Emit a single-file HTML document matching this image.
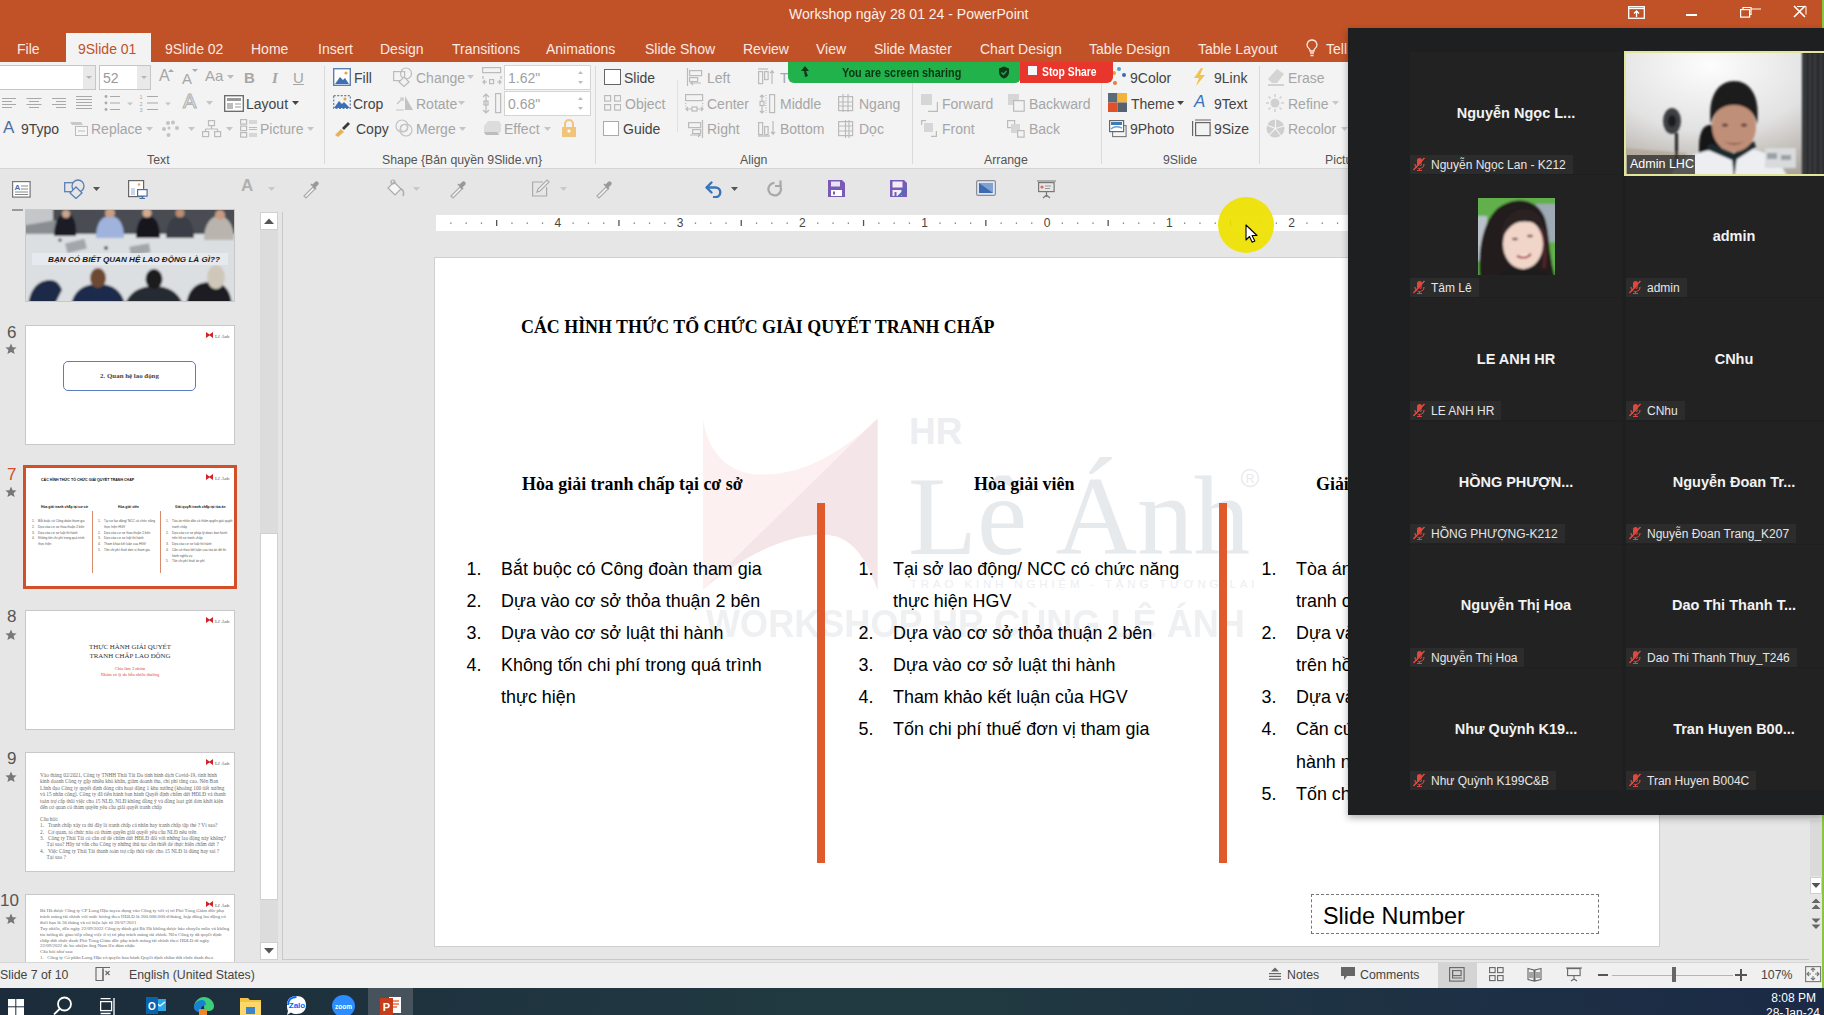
<!DOCTYPE html>
<html><head><meta charset="utf-8">
<style>
*{margin:0;padding:0;box-sizing:border-box}
html,body{width:1824px;height:1015px;overflow:hidden;background:#e6e6e6;font-family:"Liberation Sans",sans-serif}
.a{position:absolute}
.t{position:absolute;white-space:nowrap;line-height:20px}
#titlebar{left:0;top:0;width:1824px;height:62px;background:#c15127}
.tab{position:absolute;top:39px;color:#fbe9e2;font-size:14px;line-height:20px;white-space:nowrap}
#ribbon{left:0;top:62px;width:1824px;height:107px;background:#f3f3f3;border-bottom:1px solid #d4d4d4}
.rb{position:absolute;font-size:14px;line-height:20px;white-space:nowrap;color:#a6a6a6}
.rd{color:#444}
.gl{position:absolute;top:149.5px;font-size:12.3px;line-height:20px;color:#555;white-space:nowrap}
.sep{position:absolute;top:66px;width:1px;height:98px;background:#dadada}
#qat{left:0;top:169px;width:1824px;height:41px;background:#e6e6e6}
#status{left:0;top:962px;width:1824px;height:26px;background:#f0f0f0;border-top:1px solid #d6d6d6}
#taskbar{left:0;top:988px;width:1824px;height:27px;background:linear-gradient(90deg,#1c2c3a 0%,#1f3540 30%,#213a40 50%,#1e3343 70%,#1b2a46 100%)}
#slide{left:434px;top:257px;width:1226px;height:690px;background:#fff;border:1px solid #d0d0d0}
#zoom{left:1348px;top:28px;width:476px;height:787px;background:#1e1f21;box-shadow:0 3px 7px rgba(0,0,0,.30)}
.st{position:absolute;white-space:nowrap;font-size:17.9px;line-height:32.6px;color:#000}
.ss{position:absolute;white-space:nowrap;font-family:"Liberation Serif",serif;font-weight:bold;font-size:17.9px;line-height:22px;color:#000}
.wm{position:absolute;white-space:nowrap}
</style></head><body>

<!-- TITLE BAR -->
<div id="titlebar" class="a">
  <div class="t" style="left:789px;top:4px;font-size:14px;color:#fdf0ea">Workshop ngày 28 01 24 - PowerPoint</div>
  <div class="a" style="left:66px;top:33px;width:85px;height:29px;background:#f3f3f3"></div>
  <div class="tab" style="left:17px">File</div>
  <div class="tab" style="left:78px;color:#c15127">9Slide 01</div>
  <div class="tab" style="left:165px">9Slide 02</div>
  <div class="tab" style="left:251px">Home</div>
  <div class="tab" style="left:318px">Insert</div>
  <div class="tab" style="left:380px">Design</div>
  <div class="tab" style="left:452px">Transitions</div>
  <div class="tab" style="left:546px">Animations</div>
  <div class="tab" style="left:645px">Slide Show</div>
  <div class="tab" style="left:743px">Review</div>
  <div class="tab" style="left:816px">View</div>
  <div class="tab" style="left:874px">Slide Master</div>
  <div class="tab" style="left:980px">Chart Design</div>
  <div class="tab" style="left:1089px">Table Design</div>
  <div class="tab" style="left:1198px">Table Layout</div>
  <svg class="a" style="left:1306px;top:39px" width="12" height="18" fill="none" stroke="#fbe9e2" stroke-width="1.3"><path d="M6 1a4.8 4.8 0 0 0-3 8.6c.8.7 1 1.6 1 2.4h4c0-.8.2-1.7 1-2.4A4.8 4.8 0 0 0 6 1z"/><path d="M4 14h4M4.5 16.5h3"/></svg>
  <div class="tab" style="left:1326px">Tell</div>
</div>

<!-- RIBBON -->
<div id="ribbon" class="a"></div>
<!-- Text group -->
<div class="a" style="left:0;top:65px;width:96px;height:25px;background:#fff;border:1px solid #c6c6c6;border-left:none"></div>
<div class="a" style="left:83px;top:66px;width:12px;height:23px;background:#e9e9e9"></div>
<svg class="a" style="left:85px;top:75px" width="8" height="5"><path d="M1 1h6L4 4z" fill="#b5b5b5"/></svg>
<div class="a" style="left:99px;top:65px;width:52px;height:25px;background:#fff;border:1px solid #c6c6c6"></div>
<div class="a" style="left:137px;top:66px;width:13px;height:23px;background:#e9e9e9"></div>
<svg class="a" style="left:140px;top:75px" width="8" height="5"><path d="M1 1h6L4 4z" fill="#b5b5b5"/></svg>
<div class="rb" style="left:103px;top:68px;font-size:14px;color:#9a9a9a">52</div>
<div class="rb" style="left:159px;top:66px;font-size:16px">A</div>
<svg class="a" style="left:167px;top:68px" width="8" height="5"><path d="M1 4L4 1L7 4z" fill="#aaa"/></svg>
<div class="rb" style="left:182px;top:69px;font-size:15px">A</div>
<svg class="a" style="left:191px;top:68px" width="8" height="5"><path d="M1 1h6L4 4z" fill="#aaa"/></svg>
<div class="rb" style="left:205px;top:66px;font-size:15px">Aa</div>
<svg class="a" style="left:227px;top:75px" width="7" height="4"><path d="M0 0h7L3.5 4z" fill="#bbb"/></svg>
<div class="rb" style="left:244px;top:68px;font-size:15px;font-weight:bold">B</div>
<div class="rb" style="left:272px;top:68px;font-size:15px;font-style:italic;font-family:'Liberation Serif',serif;font-weight:bold">I</div>
<div class="rb" style="left:293px;top:68px;font-size:15px;text-decoration:underline">U</div>
<svg class="a" style="left:0;top:94px" width="100" height="20" stroke="#a9a9a9" stroke-width="1">
 <path d="M2 4.5h14M2 7.5h10M2 10.5h14M2 13.5h10"/>
 <path d="M26.5 4.5h15M29 7.5h10M26.5 10.5h15M29 13.5h10"/>
 <path d="M52 4.5h14M56 7.5h10M52 10.5h14M56 13.5h10"/>
 <path d="M76 2.5h16M76 5.5h16M76 8.5h16M76 11.5h16M76 14.5h16"/>
</svg>
<svg class="a" style="left:103px;top:94px" width="100" height="20">
 <g fill="#a9a9a9"><circle cx="3" cy="2.5" r="1.4"/><circle cx="3" cy="9" r="1.4"/><circle cx="3" cy="15.5" r="1.4"/></g>
 <g stroke="#a9a9a9" stroke-width="1"><path d="M7 2.5h10M7 9h10M7 15.5h10"/><path d="M44 2.5h11M44 9h11M44 15.5h11"/></g>
 <path d="M24 8.5h6l-3 3z" fill="#c5c5c5"/><path d="M62 8.5h6l-3 3z" fill="#c5c5c5"/>
 <g fill="#a9a9a9" font-size="5.5" font-family="Liberation Sans"><text x="36.5" y="5">1</text><text x="36.5" y="11.5">2</text><text x="36.5" y="18">3</text></g>
</svg>
<div class="rb" style="left:183px;top:91px;font-size:20px;color:#fff;-webkit-text-stroke:1.2px #b5b5b5">A</div>
<svg class="a" style="left:206px;top:101px" width="7" height="4"><path d="M0 0h7L3.5 4z" fill="#c5c5c5"/></svg>
<svg class="a" style="left:224px;top:95px" width="20" height="17"><rect x="0.7" y="0.7" width="18.6" height="15.6" fill="#fff" stroke="#666" stroke-width="1.3"/><rect x="3" y="3" width="14" height="3" fill="#999"/><rect x="3" y="8" width="6" height="6" fill="#bbb"/><path d="M11 9h6M11 12h6" stroke="#999"/></svg>
<div class="rb rd" style="left:246px;top:93.5px">Layout</div>
<svg class="a" style="left:292px;top:101px" width="7" height="4"><path d="M0 0h7L3.5 4z" fill="#444"/></svg>
<div class="rb" style="left:3px;top:118px;font-size:17px;color:#4a6fa5">A</div>
<div class="rb rd" style="left:21px;top:119px">9Typo</div>
<svg class="a" style="left:69px;top:121px" width="20" height="16"><path d="M1 1h11l2 3H3z" fill="#c8c8c8"/><rect x="6.5" y="5.5" width="12" height="9" fill="#f6f6f6" stroke="#bbb"/><path d="M9 10h7" stroke="#bbb"/></svg>
<div class="rb" style="left:91px;top:119px">Replace</div>
<svg class="a" style="left:146px;top:127px" width="7" height="4"><path d="M0 0h7L3.5 4z" fill="#c5c5c5"/></svg>
<svg class="a" style="left:161px;top:120px" width="20" height="18" fill="#c3c3c3"><circle cx="7" cy="3" r="2"/><circle cx="12" cy="2.5" r="2"/><circle cx="3" cy="9" r="2"/><circle cx="16" cy="8" r="2"/><circle cx="7.5" cy="15" r="2"/><circle cx="8" cy="8" r="1.5"/></svg>
<svg class="a" style="left:188px;top:127px" width="7" height="4"><path d="M0 0h7L3.5 4z" fill="#c5c5c5"/></svg>
<svg class="a" style="left:202px;top:120px" width="20" height="18" fill="none" stroke="#bbb" stroke-width="1.2"><rect x="6.5" y="0.6" width="6" height="5"/><rect x="0.6" y="11.6" width="6" height="5"/><rect x="12.6" y="11.6" width="6" height="5"/><path d="M9.5 6v3M3.5 9h12M3.5 9v2.5M15.5 9v2.5"/></svg>
<svg class="a" style="left:226px;top:127px" width="7" height="4"><path d="M0 0h7L3.5 4z" fill="#c5c5c5"/></svg>
<svg class="a" style="left:240px;top:119px" width="18" height="19" fill="none" stroke="#bbb" stroke-width="1.2"><rect x="0.6" y="0.6" width="6" height="4.5"/><rect x="0.6" y="7.1" width="6" height="4.5"/><rect x="0.6" y="13.6" width="6" height="4.5"/><path d="M9 2h8M9 4h8M9 8.5h8M9 10.5h8M9 15h8M9 17h8"/></svg>
<div class="rb" style="left:260px;top:119px">Picture</div>
<svg class="a" style="left:307px;top:127px" width="7" height="4"><path d="M0 0h7L3.5 4z" fill="#c5c5c5"/></svg>
<div class="gl" style="left:147px">Text</div>
<div class="sep" style="left:324px"></div>
<!-- Shape group -->
<svg class="a" style="left:333px;top:68px" width="18" height="18"><rect x="0.7" y="0.7" width="16.6" height="16.6" fill="#fff" stroke="#5d7fb0" stroke-width="1.4"/><path d="M2 16L7 9l3 3 2-2 4 6z" fill="#3d6fb6"/><circle cx="13" cy="5" r="1.6" fill="#e8a33c"/></svg>
<div class="rb rd" style="left:354px;top:68px">Fill</div>
<svg class="a" style="left:333px;top:95px" width="18" height="14"><rect x="0.7" y="0.7" width="16.6" height="12.6" fill="none" stroke="#5d7fb0" stroke-width="1.2" stroke-dasharray="2 1.5"/><path d="M1 13L6 6l3 3 2-2 6 6z" fill="#3d6fb6"/><circle cx="12" cy="4" r="1.5" fill="#e8a33c"/></svg>
<div class="rb rd" style="left:353px;top:93.5px">Crop</div>
<svg class="a" style="left:333px;top:121px" width="18" height="16"><path d="M2 14l6-6 3 3-6 5z" fill="#e6b35c"/><path d="M9 7l6-6 2 2-6 6z" fill="#3a3a3a"/></svg>
<div class="rb rd" style="left:356px;top:119px">Copy</div>
<svg class="a" style="left:393px;top:67px" width="20" height="20" fill="none" stroke="#bbb" stroke-width="1.2"><rect x="0.6" y="4.6" width="11" height="9"/><circle cx="13" cy="6.5" r="5.5"/><path d="M11 10l5 5-5 4.5-5-4.5z" fill="#f3f3f3"/></svg>
<div class="rb" style="left:416px;top:68px">Change</div>
<svg class="a" style="left:467px;top:75px" width="7" height="4"><path d="M0 0h7L3.5 4z" fill="#c5c5c5"/></svg>
<svg class="a" style="left:395px;top:94px" width="19" height="17"><path d="M10 16V2l8 14z" fill="#c3c3c3"/><path d="M1 16h8M2 10l5-5M5 4h3v3" stroke="#c3c3c3" stroke-width="1.2" fill="none"/></svg>
<div class="rb" style="left:416px;top:93.5px">Rotate</div>
<svg class="a" style="left:458px;top:101px" width="7" height="4"><path d="M0 0h7L3.5 4z" fill="#c5c5c5"/></svg>
<svg class="a" style="left:395px;top:119px" width="19" height="19" fill="none" stroke="#c3c3c3" stroke-width="1.2"><circle cx="7" cy="7" r="6"/><circle cx="11" cy="11" r="6"/><circle cx="9" cy="9" r="3.5"/></svg>
<div class="rb" style="left:416px;top:119px">Merge</div>
<svg class="a" style="left:459px;top:127px" width="7" height="4"><path d="M0 0h7L3.5 4z" fill="#c5c5c5"/></svg>
<svg class="a" style="left:482px;top:67px" width="20" height="19" fill="none" stroke="#bbb" stroke-width="1.2"><rect x="0.6" y="0.6" width="18" height="5"/><path d="M1 9v3M19 9v3M1 15h4M15 15h4M3 13l-2 2 2 2M17 13l2 2-2 2"/><rect x="7.6" y="12.6" width="4" height="4"/></svg>
<div class="a" style="left:504px;top:65px;width:87px;height:25px;background:#fff;border:1px solid #d4d4d4"></div>
<div class="rb" style="left:508px;top:68px;color:#9f9f9f">1.62"</div>
<svg class="a" style="left:577px;top:70px" width="7" height="15"><path d="M1 4L3.5 1L6 4zM1 11h5L3.5 14z" fill="#bdbdbd"/></svg>
<svg class="a" style="left:482px;top:93px" width="20" height="21" fill="none" stroke="#bbb" stroke-width="1.2"><rect x="13.6" y="0.6" width="5" height="19"/><path d="M4 1v19M1 4l3-3 3 3M1 17l3 3 3-3"/><rect x="2" y="8" width="4" height="4"/></svg>
<div class="a" style="left:504px;top:91px;width:87px;height:25px;background:#fff;border:1px solid #d4d4d4"></div>
<div class="rb" style="left:508px;top:93.5px;color:#9f9f9f">0.68"</div>
<svg class="a" style="left:577px;top:96px" width="7" height="15"><path d="M1 4L3.5 1L6 4zM1 11h5L3.5 14z" fill="#bdbdbd"/></svg>
<svg class="a" style="left:483px;top:120px" width="19" height="16"><path d="M5 1h11l2 3v7l-3 4H3l-2-3V6z" fill="#dcdcdc"/><path d="M3 15l-2-3h13l2 3z" fill="#bcbcbc"/></svg>
<div class="rb" style="left:504px;top:119px">Effect</div>
<svg class="a" style="left:544px;top:127px" width="7" height="4"><path d="M0 0h7L3.5 4z" fill="#c5c5c5"/></svg>
<svg class="a" style="left:561px;top:119px" width="16" height="19"><path d="M4 8V5a4 4 0 0 1 8 0v3" fill="none" stroke="#f0c47a" stroke-width="2"/><rect x="1" y="8" width="14" height="10" fill="#f0c47a"/><circle cx="8" cy="12" r="1.6" fill="#fff"/></svg>
<div class="gl" style="left:382px">Shape {Bản quyền 9Slide.vn}</div>
<div class="sep" style="left:595px"></div>
<!-- Align group -->
<div class="a" style="left:604px;top:69px;width:17px;height:16px;background:#fff;border:1.3px solid #666"></div>
<div class="rb rd" style="left:624px;top:68px">Slide</div>
<svg class="a" style="left:604px;top:95px" width="17" height="16" fill="none" stroke="#bbb" stroke-width="1.2"><rect x="0.6" y="0.6" width="6" height="5.5"/><rect x="10.6" y="0.6" width="6" height="5.5"/><rect x="0.6" y="9.6" width="6" height="5.5"/><rect x="10.6" y="9.6" width="6" height="5.5"/></svg>
<div class="rb" style="left:625px;top:93.5px">Object</div>
<div class="a" style="left:603px;top:121px;width:16px;height:15px;background:#fff;border:1px solid #aaa"></div>
<div class="rb rd" style="left:623px;top:119px">Guide</div>
<div class="a" style="left:677px;top:80px;width:1px;height:52px;background:#e0e0e0"></div>
<svg class="a" style="left:686px;top:68px" width="18" height="18" fill="none" stroke="#bbb" stroke-width="1.2"><path d="M1.5 0v18"/><rect x="3.6" y="2.6" width="12" height="5"/><rect x="3.6" y="9.6" width="8" height="4"/><path d="M15 15H5l2-2M5 15l2 2"/></svg>
<div class="rb" style="left:707px;top:68px">Left</div>
<svg class="a" style="left:685px;top:94px" width="19" height="19" fill="none" stroke="#bbb" stroke-width="1.2"><rect x="0.6" y="0.6" width="17" height="6"/><path d="M0.6 9v4M17.6 9v4" stroke-dasharray="1 1.5"/><path d="M1 15h17M3 13l-2 2 2 2M16 13l2 2-2 2"/><rect x="7" y="13" width="5" height="4" fill="#f3f3f3"/></svg>
<div class="rb" style="left:707px;top:93.5px">Center</div>
<svg class="a" style="left:687px;top:120px" width="17" height="18" fill="none" stroke="#bbb" stroke-width="1.2"><path d="M15.5 0v18"/><rect x="1.6" y="2.6" width="12" height="5"/><rect x="5.6" y="9.6" width="8" height="4"/><path d="M3 15h10l-2-2M13 15l-2 2"/></svg>
<div class="rb" style="left:707px;top:119px">Right</div>
<svg class="a" style="left:758px;top:68px" width="17" height="18" fill="none" stroke="#bbb" stroke-width="1.2"><path d="M0 1h10"/><rect x="0.6" y="3.6" width="4" height="12"/><rect x="6.6" y="3.6" width="3.5" height="8"/><path d="M14 16V3l-2 2M14 3l2 2"/></svg>
<div class="rb" style="left:780px;top:68px">T</div>
<svg class="a" style="left:758px;top:94px" width="18" height="20" fill="none" stroke="#bbb" stroke-width="1.2"><rect x="11.6" y="0.6" width="5" height="18"/><path d="M4 1v18M2 3l2-2 2 2M2 17l2 2 2-2"/><rect x="2" y="7.5" width="4" height="4" fill="#f3f3f3"/><path d="M8 1v18" stroke-dasharray="1 1.5"/></svg>
<div class="rb" style="left:780px;top:93.5px">Middle</div>
<svg class="a" style="left:758px;top:120px" width="18" height="17" fill="none" stroke="#bbb" stroke-width="1.2"><path d="M0 16h12"/><rect x="0.6" y="2.6" width="4" height="12"/><rect x="6.6" y="6.6" width="3.5" height="8"/><path d="M15 1v13l-2-2M15 14l2-2"/></svg>
<div class="rb" style="left:780px;top:119px">Bottom</div>
<svg class="a" style="left:838px;top:94px" width="16" height="18" fill="none" stroke="#bbb" stroke-width="1.2"><rect x="0.6" y="2.6" width="14" height="14"/><path d="M0 8h15M0 12h15M5 0v18M10 0v18"/></svg>
<div class="rb" style="left:859px;top:93.5px">Ngang</div>
<svg class="a" style="left:838px;top:120px" width="16" height="18" fill="none" stroke="#bbb" stroke-width="1.2"><rect x="0.6" y="1.6" width="14" height="14"/><path d="M0 6h15M0 11h15M7.5 0v18M11 0v18"/></svg>
<div class="rb" style="left:859px;top:119px">Dọc</div>
<div class="gl" style="left:740px">Align</div>
<div class="sep" style="left:912px"></div>
<!-- Arrange -->
<svg class="a" style="left:921px;top:94px" width="17" height="18"><rect x="0" y="0" width="11" height="11" fill="#d6d6d6"/><path d="M7 17.4h9.4V8" fill="none" stroke="#bbb" stroke-width="1.2"/></svg>
<div class="rb" style="left:942px;top:93.5px">Forward</div>
<svg class="a" style="left:1008px;top:94px" width="17" height="18"><rect x="0" y="0" width="11" height="11" fill="#d6d6d6"/><rect x="5.6" y="6.6" width="10.6" height="10.6" fill="#f3f3f3" stroke="#bbb" stroke-width="1.2"/></svg>
<div class="rb" style="left:1029px;top:93.5px">Backward</div>
<svg class="a" style="left:921px;top:120px" width="16" height="17"><path d="M0.6 5V0.6H5" fill="none" stroke="#bbb" stroke-width="1.2"/><rect x="3" y="3" width="9" height="9" fill="#d6d6d6"/><path d="M10 16.4h5.4V11" fill="none" stroke="#bbb" stroke-width="1.2"/></svg>
<div class="rb" style="left:942px;top:119px">Front</div>
<svg class="a" style="left:1007px;top:120px" width="18" height="18"><rect x="0.6" y="0.6" width="7" height="7" fill="#f3f3f3" stroke="#bbb" stroke-width="1.2"/><rect x="4" y="4" width="9" height="9" fill="#d6d6d6"/><rect x="10.6" y="10.6" width="6.5" height="6.5" fill="#f3f3f3" stroke="#bbb" stroke-width="1.2"/></svg>
<div class="rb" style="left:1029px;top:119px">Back</div>
<div class="gl" style="left:984px">Arrange</div>
<div class="sep" style="left:1101px"></div>
<!-- 9Slide -->
<svg class="a" style="left:1108px;top:66px" width="20" height="22"><circle cx="11" cy="3" r="2" fill="#4aa3c8"/><circle cx="6" cy="7" r="2" fill="#e9a23b"/><circle cx="16" cy="9" r="2" fill="#3c6ab3"/><circle cx="7" cy="17" r="2" fill="#e77e3a"/><circle cx="3" cy="11" r="1.6" fill="#6ab04c"/></svg>
<div class="rb rd" style="left:1130px;top:68px">9Color</div>
<svg class="a" style="left:1108px;top:93px" width="19" height="19"><rect x="0" y="0" width="9.5" height="9.5" fill="#5c6b7a"/><rect x="9.5" y="0" width="9.5" height="9.5" fill="#f2b33d"/><rect x="0" y="9.5" width="9.5" height="9.5" fill="#e0502b"/><rect x="9.5" y="9.5" width="9.5" height="9.5" fill="#56636f"/></svg>
<div class="rb rd" style="left:1131px;top:93.5px">Theme</div>
<svg class="a" style="left:1177px;top:101px" width="7" height="4"><path d="M0 0h7L3.5 4z" fill="#444"/></svg>
<svg class="a" style="left:1109px;top:120px" width="18" height="18"><rect x="3.6" y="5.6" width="13.5" height="11" fill="#f4f4f4" stroke="#777" stroke-width="1.1"/><rect x="0.6" y="0.6" width="14" height="11" fill="#fff" stroke="#666" stroke-width="1.2"/><rect x="2" y="2" width="11" height="3" fill="#3d7ab8"/><path d="M2 9c3-3 6-3 11-1" stroke="#6aa0cf" stroke-width="1.5" fill="none"/></svg>
<div class="rb rd" style="left:1130px;top:119px">9Photo</div>
<svg class="a" style="left:1193px;top:68px" width="13" height="18"><path d="M8 0L1 10h5l-3 8 9-11H7l3-7z" fill="#f2c14e"/></svg>
<div class="rb rd" style="left:1214px;top:68px">9Link</div>
<div class="rb" style="left:1194px;top:92px;font-size:17px;font-style:italic;color:#3c6fc0">A</div>
<div class="rb rd" style="left:1214px;top:93.5px">9Text</div>
<svg class="a" style="left:1192px;top:119px" width="19" height="18" fill="none" stroke="#666" stroke-width="1.2"><rect x="3.6" y="3.6" width="14.5" height="13"/><path d="M0.6 2v15M3 1h16"/></svg>
<div class="rb rd" style="left:1214px;top:119px">9Size</div>
<div class="gl" style="left:1163px">9Slide</div>
<div class="sep" style="left:1259px"></div>
<svg class="a" style="left:1267px;top:68px" width="18" height="18"><path d="M10 1l7 5-7 9H5L1 11z" fill="#d4d4d4"/><path d="M1 17h16" stroke="#bbb" stroke-width="1.2"/></svg>
<div class="rb" style="left:1288px;top:68px">Erase</div>
<svg class="a" style="left:1266px;top:94px" width="18" height="18" fill="#d0d0d0"><circle cx="9" cy="9" r="4.5"/><path d="M9 0v3M9 15v3M0 9h3M15 9h3M2.5 2.5l2 2M13.5 13.5l2 2M2.5 15.5l2-2M13.5 4.5l2-2" stroke="#d0d0d0" stroke-width="1.5"/></svg>
<div class="rb" style="left:1288px;top:93.5px">Refine</div>
<svg class="a" style="left:1332px;top:101px" width="7" height="4"><path d="M0 0h7L3.5 4z" fill="#c8c8c8"/></svg>
<svg class="a" style="left:1266px;top:119px" width="19" height="19"><circle cx="9.5" cy="9.5" r="9" fill="#cfcfcf"/><path d="M9.5 9.5L9.5 0.5M9.5 9.5L18 7M9.5 9.5L15 17M9.5 9.5L3 16M9.5 9.5L1 6" stroke="#f3f3f3" stroke-width="1.2"/></svg>
<div class="rb" style="left:1288px;top:119px">Recolor</div>
<svg class="a" style="left:1341px;top:127px" width="7" height="4"><path d="M0 0h7L3.5 4z" fill="#c8c8c8"/></svg>
<div class="gl" style="left:1325px">Pictu</div>
<!-- share banner -->
<div class="a" style="left:788px;top:62px;width:233px;height:21px;background:#22b24c;border-radius:0 0 6px 6px"></div>
<svg class="a" style="left:800px;top:65px" width="12" height="14"><path d="M5 1L1 6h3l1 6 3-1-2-5h3z" fill="#0d3a1a"/></svg>
<div class="t" style="left:842px;top:62.5px;font-size:12px;line-height:20px;font-weight:bold;color:#0b3616;transform:scaleX(0.905);transform-origin:0 0">You are screen sharing</div>
<svg class="a" style="left:998px;top:66px" width="12" height="13"><path d="M6 0.5L11 2.5v4c0 3-2.3 5.2-5 6-2.7-.8-5-3-5-6v-4z" fill="#0d3a1a"/><path d="M3.5 6.5l2 2 3-3.5" stroke="#22b24c" stroke-width="1.3" fill="none"/></svg>
<div class="a" style="left:1020px;top:62px;width:93px;height:21px;background:#e8362c;border-radius:0 0 6px 0"></div>
<div class="a" style="left:1028px;top:66px;width:9px;height:9px;background:#f4f8fb"></div>
<div class="t" style="left:1042px;top:62px;font-size:12px;line-height:20px;font-weight:bold;color:#fff;transform:scaleX(0.86);transform-origin:0 0">Stop Share</div>


<!-- QAT -->
<div id="qat" class="a"></div>
<svg class="a" style="left:12px;top:181px" width="19" height="17"><rect x="0.6" y="0.6" width="17.5" height="15.5" fill="#fff" stroke="#777" stroke-width="1.2"/><text x="2.5" y="9" font-size="8" font-weight="bold" fill="#4a6fa5" font-family="Liberation Sans">A</text><path d="M9 5h7M9 8h7M3 11h13M3 13.5h13" stroke="#888" stroke-width="1"/></svg>
<svg class="a" style="left:64px;top:179px" width="22" height="20" fill="none" stroke="#5c7fb5" stroke-width="1.3"><rect x="0.7" y="3.7" width="10" height="9"/><circle cx="14" cy="7" r="6" fill="#e6e6e6"/><path d="M12 8l6 6-6 5.5-6-5.5z" fill="#e6e6e6"/></svg>
<svg class="a" style="left:93px;top:187px" width="7" height="4"><path d="M0 0h7L3.5 4z" fill="#555"/></svg>
<svg class="a" style="left:128px;top:180px" width="20" height="19"><rect x="0.6" y="0.6" width="15" height="16" fill="#fff" stroke="#666" stroke-width="1.2"/><circle cx="11" cy="4.5" r="1.3" fill="#e8b04a"/><rect x="3" y="8" width="4" height="7" fill="#c8d8ec"/><rect x="9.6" y="9.6" width="9.5" height="6.5" fill="#fff" stroke="#4a6fa5" stroke-width="1.2"/><path d="M14.3 16v2M11.5 18.5h5.5" stroke="#4a6fa5" stroke-width="1.2"/></svg>
<div class="rb" style="left:241px;top:176px;font-size:17px;font-weight:bold;color:#b0b0b0">A</div>
<svg class="a" style="left:268px;top:187px" width="7" height="4"><path d="M0 0h7L3.5 4z" fill="#c8c8c8"/></svg>
<svg class="a" style="left:301px;top:180px" width="18" height="19"><path d="M3 16L12 7l2 2-9 9z" fill="#f6f6f6" stroke="#aaa" stroke-width="1.2"/><path d="M11 5l3-3a2 2 0 0 1 3 3l-3 3z" fill="#999"/><path d="M10 4l5 5" stroke="#999" stroke-width="1.5"/></svg>
<svg class="a" style="left:386px;top:179px" width="20" height="20"><path d="M8 3l7 7-6 6-7-7z" fill="#f6f6f6" stroke="#aaa" stroke-width="1.2"/><circle cx="7" cy="3" r="2" fill="none" stroke="#aaa" stroke-width="1.2"/><path d="M15 10c3 1 3 5 2 7" fill="none" stroke="#aaa" stroke-width="1.5"/></svg>
<svg class="a" style="left:413px;top:187px" width="7" height="4"><path d="M0 0h7L3.5 4z" fill="#c8c8c8"/></svg>
<svg class="a" style="left:448px;top:180px" width="18" height="19"><path d="M3 16L12 7l2 2-9 9z" fill="#f6f6f6" stroke="#aaa" stroke-width="1.2"/><path d="M11 5l3-3a2 2 0 0 1 3 3l-3 3z" fill="#999"/><path d="M10 4l5 5" stroke="#999" stroke-width="1.5"/></svg>
<svg class="a" style="left:531px;top:179px" width="20" height="19" fill="none" stroke="#aaa" stroke-width="1.2"><path d="M12 3H1.6v14h14V8"/><path d="M6 13l1-3 9-9 2 2-9 9z" fill="#f3f3f3"/></svg>
<svg class="a" style="left:560px;top:187px" width="7" height="4"><path d="M0 0h7L3.5 4z" fill="#c8c8c8"/></svg>
<svg class="a" style="left:594px;top:180px" width="18" height="19"><path d="M3 16L12 7l2 2-9 9z" fill="#f6f6f6" stroke="#aaa" stroke-width="1.2"/><path d="M11 5l3-3a2 2 0 0 1 3 3l-3 3z" fill="#999"/><path d="M10 4l5 5" stroke="#999" stroke-width="1.5"/></svg>
<svg class="a" style="left:704px;top:180px" width="19" height="18"><path d="M3 7.5h8.5a4.8 4.8 0 0 1 0 9.6H10" fill="none" stroke="#3a74b8" stroke-width="2.4" stroke-linecap="round"/><path d="M7.5 2.5L2.5 7.5L7.5 12.5" fill="none" stroke="#3a74b8" stroke-width="2.4" stroke-linecap="round" stroke-linejoin="round"/></svg>
<svg class="a" style="left:731px;top:187px" width="7" height="4"><path d="M0 0h7L3.5 4z" fill="#555"/></svg>
<svg class="a" style="left:767px;top:180px" width="17" height="18"><path d="M12.5 5a6.3 6.3 0 1 1-5-2.2" fill="none" stroke="#a8a8a8" stroke-width="2.2"/><path d="M13.5 0.5v5.5H8" fill="none" stroke="#a8a8a8" stroke-width="2.2"/></svg>
<svg class="a" style="left:828px;top:180px" width="17" height="17"><path d="M0 0h14l3 3v14H0z" fill="#7b5ab6"/><rect x="3" y="1.5" width="9" height="5" fill="#e9e3f5"/><rect x="3" y="10" width="11" height="6" fill="#fff"/><rect x="5" y="11.5" width="2" height="3" fill="#7b5ab6"/></svg>
<svg class="a" style="left:890px;top:180px" width="17" height="17"><path d="M0 0h14l3 3v14H0z" fill="#7b5ab6"/><rect x="2.5" y="1.5" width="10" height="6" fill="#f1eef7"/><rect x="2.5" y="10" width="9" height="6" fill="#f1eef7"/><rect x="4.5" y="12" width="2" height="4" fill="#7b5ab6"/><path d="M8.5 16.5L16.5 8.5" stroke="#3f72c0" stroke-width="2.4"/></svg>
<svg class="a" style="left:976px;top:180px" width="20" height="16"><rect x="0.6" y="0.6" width="18.8" height="14.8" rx="1.5" fill="#dfe6ef" stroke="#8a8f97" stroke-width="1.2"/><rect x="3" y="3" width="14" height="10" fill="#3c6bb1"/><path d="M3 3h14v10z" fill="#9cb8e2" opacity=".7"/></svg>
<svg class="a" style="left:1037px;top:180px" width="19" height="19" fill="none" stroke="#777" stroke-width="1.2"><rect x="1.6" y="2.6" width="15.5" height="9"/><path d="M0 1h19M9.5 12v5M6 18l3.5-3 3.5 3"/><circle cx="5" cy="7" r="1.6" fill="#e36a5a" stroke="none"/><path d="M8 6h6M8 8.5h5" stroke="#999"/></svg>
<!-- ruler -->
<div class="a" style="left:436px;top:215px;width:912px;height:16px;background:#fff"></div>
<svg class="a" style="left:437px;top:215px" width="911" height="16" id="ruler"><rect x="13.2" y="7.5" width="1.3" height="1.3" fill="#777"/><rect x="28.5" y="7.5" width="1.3" height="1.3" fill="#777"/><rect x="43.8" y="7.5" width="1.3" height="1.3" fill="#777"/><rect x="59.0" y="5" width="1.3" height="6" fill="#555"/><rect x="74.3" y="7.5" width="1.3" height="1.3" fill="#777"/><rect x="89.6" y="7.5" width="1.3" height="1.3" fill="#777"/><rect x="104.9" y="7.5" width="1.3" height="1.3" fill="#777"/><text x="120.8" y="12" font-size="12" fill="#444" text-anchor="middle" font-family="Liberation Sans">4</text><rect x="135.5" y="7.5" width="1.3" height="1.3" fill="#777"/><rect x="150.8" y="7.5" width="1.3" height="1.3" fill="#777"/><rect x="166.1" y="7.5" width="1.3" height="1.3" fill="#777"/><rect x="181.3" y="5" width="1.3" height="6" fill="#555"/><rect x="196.6" y="7.5" width="1.3" height="1.3" fill="#777"/><rect x="211.9" y="7.5" width="1.3" height="1.3" fill="#777"/><rect x="227.2" y="7.5" width="1.3" height="1.3" fill="#777"/><text x="243.1" y="12" font-size="12" fill="#444" text-anchor="middle" font-family="Liberation Sans">3</text><rect x="257.8" y="7.5" width="1.3" height="1.3" fill="#777"/><rect x="273.1" y="7.5" width="1.3" height="1.3" fill="#777"/><rect x="288.4" y="7.5" width="1.3" height="1.3" fill="#777"/><rect x="303.6" y="5" width="1.3" height="6" fill="#555"/><rect x="318.9" y="7.5" width="1.3" height="1.3" fill="#777"/><rect x="334.2" y="7.5" width="1.3" height="1.3" fill="#777"/><rect x="349.5" y="7.5" width="1.3" height="1.3" fill="#777"/><text x="365.4" y="12" font-size="12" fill="#444" text-anchor="middle" font-family="Liberation Sans">2</text><rect x="380.1" y="7.5" width="1.3" height="1.3" fill="#777"/><rect x="395.4" y="7.5" width="1.3" height="1.3" fill="#777"/><rect x="410.7" y="7.5" width="1.3" height="1.3" fill="#777"/><rect x="425.9" y="5" width="1.3" height="6" fill="#555"/><rect x="441.2" y="7.5" width="1.3" height="1.3" fill="#777"/><rect x="456.5" y="7.5" width="1.3" height="1.3" fill="#777"/><rect x="471.8" y="7.5" width="1.3" height="1.3" fill="#777"/><text x="487.7" y="12" font-size="12" fill="#444" text-anchor="middle" font-family="Liberation Sans">1</text><rect x="502.4" y="7.5" width="1.3" height="1.3" fill="#777"/><rect x="517.7" y="7.5" width="1.3" height="1.3" fill="#777"/><rect x="533.0" y="7.5" width="1.3" height="1.3" fill="#777"/><rect x="548.2" y="5" width="1.3" height="6" fill="#555"/><rect x="563.5" y="7.5" width="1.3" height="1.3" fill="#777"/><rect x="578.8" y="7.5" width="1.3" height="1.3" fill="#777"/><rect x="594.1" y="7.5" width="1.3" height="1.3" fill="#777"/><text x="610.0" y="12" font-size="12" fill="#444" text-anchor="middle" font-family="Liberation Sans">0</text><rect x="624.7" y="7.5" width="1.3" height="1.3" fill="#777"/><rect x="640.0" y="7.5" width="1.3" height="1.3" fill="#777"/><rect x="655.3" y="7.5" width="1.3" height="1.3" fill="#777"/><rect x="670.5" y="5" width="1.3" height="6" fill="#555"/><rect x="685.8" y="7.5" width="1.3" height="1.3" fill="#777"/><rect x="701.1" y="7.5" width="1.3" height="1.3" fill="#777"/><rect x="716.4" y="7.5" width="1.3" height="1.3" fill="#777"/><text x="732.3" y="12" font-size="12" fill="#444" text-anchor="middle" font-family="Liberation Sans">1</text><rect x="747.0" y="7.5" width="1.3" height="1.3" fill="#777"/><rect x="762.3" y="7.5" width="1.3" height="1.3" fill="#777"/><rect x="777.6" y="7.5" width="1.3" height="1.3" fill="#777"/><rect x="792.9" y="5" width="1.3" height="6" fill="#555"/><rect x="808.1" y="7.5" width="1.3" height="1.3" fill="#777"/><rect x="823.4" y="7.5" width="1.3" height="1.3" fill="#777"/><rect x="838.7" y="7.5" width="1.3" height="1.3" fill="#777"/><text x="854.6" y="12" font-size="12" fill="#444" text-anchor="middle" font-family="Liberation Sans">2</text><rect x="869.3" y="7.5" width="1.3" height="1.3" fill="#777"/><rect x="884.6" y="7.5" width="1.3" height="1.3" fill="#777"/><rect x="899.9" y="7.5" width="1.3" height="1.3" fill="#777"/></svg>
<!-- left panel -->
<div class="a" style="left:25px;top:209px;width:210px;height:93px;border:1px solid #c8c8c8;overflow:hidden;background:#dfe1e3">
<svg width="208" height="91" style="display:block">
<defs><filter id="bl" x="-10%" y="-10%" width="120%" height="120%"><feGaussianBlur stdDeviation="1.1"/></filter></defs>
<g filter="url(#bl)">
<rect x="-5" y="-5" width="220" height="100" fill="#dcdfe2"/>
<rect x="-5" y="-5" width="220" height="29" fill="#4a4e53"/>
<rect x="-5" y="-5" width="32" height="29" fill="#c4c7ca"/>
<path d="M-5 16 L30 10 L30 24 L-5 24z" fill="#8a8e92"/>
<path d="M28 26c0-12 4-22 12-24 8 2 11 12 10 24z" fill="#1c1e25"/>
<circle cx="40" cy="4" r="4" fill="#caa58e"/>
<path d="M70 28c0-14 5-22 14-22s14 8 14 22z" fill="#9fb3dc"/>
<circle cx="84" cy="3" r="5" fill="#c79f86"/>
<path d="M110 28c0-14 4-22 12-22s12 8 12 22z" fill="#16171c"/>
<circle cx="121" cy="3" r="4.5" fill="#d1ab92"/>
<path d="M140 28c0-14 5-22 14-22s14 8 14 22z" fill="#3b3e46"/>
<circle cx="154" cy="3" r="4.5" fill="#b98c74"/>
<path d="M178 30c0-14 6-24 15-24s15 10 15 24z" fill="#b9b5ae"/>
<circle cx="194" cy="5" r="5" fill="#c89c84"/>
<rect x="40" y="31" width="20" height="10" fill="#a3a6aa" transform="rotate(-14 50 36)"/>
<rect x="104" y="35" width="20" height="9" fill="#a3a6aa" transform="rotate(-10 114 40)"/>
<circle cx="34" cy="30" r="1.6" fill="#222"/>
<circle cx="80" cy="38" r="1.8" fill="#222"/>
<path d="M2 100c0-20 10-30 22-30 6 0 10 4 12 10l-10 20z" fill="#1d2946"/>
<path d="M44 100c2-18 12-26 28-26s26 8 28 26z" fill="#1b2a4c"/>
<ellipse cx="72" cy="68" rx="8" ry="10" fill="#6e4a32"/>
<path d="M98 100c2-16 14-24 30-24s28 8 30 24z" fill="#262a33"/>
<ellipse cx="128" cy="69" rx="8.5" ry="10" fill="#1a1a1b"/>
<path d="M160 100c0-18 8-28 24-28s22 10 22 28z" fill="#1c1e24"/>
<ellipse cx="190" cy="67" rx="9" ry="12" fill="#cfc8ba"/>
</g>
<rect x="6" y="43" width="196" height="12" fill="#e6e9ee" opacity="0.92"/>
<text x="108" y="52.3" text-anchor="middle" font-size="8.1" font-weight="bold" font-style="italic" fill="#1a1c22" font-family="Liberation Sans">BẠN CÓ BIẾT QUAN HỆ LAO ĐỘNG LÀ GÌ??</text>
</svg></div>
<div class="a" style="left:12px;top:209px;width:11px;height:2px;background:#9a9a9a"></div>
<!-- THUMBS -->
<div class="a" style="left:25px;top:325px;width:210px;height:120px;border:1px solid #c8c8c8;background:#fff"></div>
<div class="t" style="left:7px;top:323px;font-size:17px;line-height:20px;color:#555">6</div>
<svg class="a" style="left:5px;top:343px" width="12" height="12"><path d="M6 0.5l1.6 3.7 4 .3-3 2.6 1 3.9L6 8.9 2.4 11l1-3.9-3-2.6 4-.3z" fill="#777"/></svg>
<svg class="a" style="left:206px;top:331px" width="30" height="9"><path d="M0 1L3.5 3.5L7 1V7L3.5 4.5L0 7z" fill="#d2222a"/><text x="9" y="7.3" font-size="4.8" font-family="Liberation Serif" fill="#555">Lê Ánh</text></svg><div class="a" style="left:63px;top:361px;width:133px;height:30px;border:1.5px solid #5b7cc0;border-radius:5px"></div>
<div class="t" style="left:63px;top:366px;width:133px;text-align:center;font-size:6.9px;line-height:20px;font-family:'Liberation Serif',serif;font-weight:bold;color:#444">2. Quan hệ lao động</div>
<div class="a" style="left:23px;top:465px;width:214px;height:124px;border:3px solid #d24f28;background:#fff"></div>
<div class="t" style="left:7px;top:465px;font-size:17px;line-height:20px;color:#d24f28">7</div>
<svg class="a" style="left:5px;top:486px" width="12" height="12"><path d="M6 0.5l1.6 3.7 4 .3-3 2.6 1 3.9L6 8.9 2.4 11l1-3.9-3-2.6 4-.3z" fill="#777"/></svg>
<svg class="a" style="left:206px;top:473px" width="30" height="9"><path d="M0 1L3.5 3.5L7 1V7L3.5 4.5L0 7z" fill="#d2222a"/><text x="9" y="7.3" font-size="4.8" font-family="Liberation Serif" fill="#555">Lê Ánh</text></svg>
<div class="t" style="left:41px;top:476px;font-size:3.6px;line-height:8px;font-weight:bold;color:#111">CÁC HÌNH THỨC TỔ CHỨC GIẢI QUYẾT TRANH CHẤP</div>
<div class="t" style="left:41px;top:503px;font-size:3.4px;line-height:8px;font-weight:bold;color:#111">Hòa giải tranh chấp tại cơ sở</div>
<div class="t" style="left:118px;top:503px;font-size:3.4px;line-height:8px;font-weight:bold;color:#111">Hòa giải viên</div>
<div class="t" style="left:175px;top:503px;font-size:3.4px;line-height:8px;font-weight:bold;color:#111">Giải quyết tranh chấp tại tòa án</div>
<div class="a" style="left:91.5px;top:511px;width:1.5px;height:62px;background:#d98a6c"></div>
<div class="a" style="left:159.5px;top:511px;width:1.5px;height:62px;background:#d98a6c"></div>
<div class="t" style="left:32px;top:517.0px;font-size:3.2px;line-height:8px;color:#555">1.</div>
<div class="t" style="left:38px;top:517.0px;font-size:3.2px;line-height:8px;color:#555">Bắt buộc có Công đoàn tham gia</div>
<div class="t" style="left:32px;top:522.8px;font-size:3.2px;line-height:8px;color:#555">2.</div>
<div class="t" style="left:38px;top:522.8px;font-size:3.2px;line-height:8px;color:#555">Dựa vào cơ sở thỏa thuận 2 bên</div>
<div class="t" style="left:32px;top:528.5px;font-size:3.2px;line-height:8px;color:#555">3.</div>
<div class="t" style="left:38px;top:528.5px;font-size:3.2px;line-height:8px;color:#555">Dựa vào cơ sở luật thi hành</div>
<div class="t" style="left:32px;top:534.2px;font-size:3.2px;line-height:8px;color:#555">4.</div>
<div class="t" style="left:38px;top:534.2px;font-size:3.2px;line-height:8px;color:#555">Không tốn chi phí trong quá trình</div>
<div class="t" style="left:38px;top:540.0px;font-size:3.2px;line-height:8px;color:#555">thực hiện</div>
<div class="t" style="left:98px;top:517.0px;font-size:3.2px;line-height:8px;color:#555">1.</div>
<div class="t" style="left:104px;top:517.0px;font-size:3.2px;line-height:8px;color:#555">Tại sở lao động/ NCC có chức năng</div>
<div class="t" style="left:104px;top:522.8px;font-size:3.2px;line-height:8px;color:#555">thực hiện HGV</div>
<div class="t" style="left:98px;top:528.5px;font-size:3.2px;line-height:8px;color:#555">2.</div>
<div class="t" style="left:104px;top:528.5px;font-size:3.2px;line-height:8px;color:#555">Dựa vào cơ sở thỏa thuận 2 bên</div>
<div class="t" style="left:98px;top:534.2px;font-size:3.2px;line-height:8px;color:#555">3.</div>
<div class="t" style="left:104px;top:534.2px;font-size:3.2px;line-height:8px;color:#555">Dựa vào cơ sở luật thi hành</div>
<div class="t" style="left:98px;top:540.0px;font-size:3.2px;line-height:8px;color:#555">4.</div>
<div class="t" style="left:104px;top:540.0px;font-size:3.2px;line-height:8px;color:#555">Tham khảo kết luận của HGV</div>
<div class="t" style="left:98px;top:545.8px;font-size:3.2px;line-height:8px;color:#555">5.</div>
<div class="t" style="left:104px;top:545.8px;font-size:3.2px;line-height:8px;color:#555">Tốn chi phí thuế đơn vị tham gia</div>
<div class="t" style="left:166px;top:517.0px;font-size:3.2px;line-height:8px;color:#555">1.</div>
<div class="t" style="left:172px;top:517.0px;font-size:3.2px;line-height:8px;color:#555">Tòa án nhân dân có thẩm quyền giải quyết</div>
<div class="t" style="left:172px;top:522.8px;font-size:3.2px;line-height:8px;color:#555">tranh chấp</div>
<div class="t" style="left:166px;top:528.5px;font-size:3.2px;line-height:8px;color:#555">2.</div>
<div class="t" style="left:172px;top:528.5px;font-size:3.2px;line-height:8px;color:#555">Dựa vào cơ sở pháp lý được ban hành</div>
<div class="t" style="left:172px;top:534.2px;font-size:3.2px;line-height:8px;color:#555">trên hồ sơ tranh chấp</div>
<div class="t" style="left:166px;top:540.0px;font-size:3.2px;line-height:8px;color:#555">3.</div>
<div class="t" style="left:172px;top:540.0px;font-size:3.2px;line-height:8px;color:#555">Dựa vào cơ sở luật thi hành</div>
<div class="t" style="left:166px;top:545.8px;font-size:3.2px;line-height:8px;color:#555">4.</div>
<div class="t" style="left:172px;top:545.8px;font-size:3.2px;line-height:8px;color:#555">Căn cứ theo kết luận của tòa án để thi</div>
<div class="t" style="left:172px;top:551.5px;font-size:3.2px;line-height:8px;color:#555">hành nghĩa vụ</div>
<div class="t" style="left:166px;top:557.2px;font-size:3.2px;line-height:8px;color:#555">5.</div>
<div class="t" style="left:172px;top:557.2px;font-size:3.2px;line-height:8px;color:#555">Tốn chi phí thuê án phí</div>
<div class="a" style="left:25px;top:610px;width:210px;height:120px;border:1px solid #c8c8c8;background:#fff"></div>
<div class="t" style="left:7px;top:607px;font-size:17px;line-height:20px;color:#555">8</div>
<svg class="a" style="left:5px;top:629px" width="12" height="12"><path d="M6 0.5l1.6 3.7 4 .3-3 2.6 1 3.9L6 8.9 2.4 11l1-3.9-3-2.6 4-.3z" fill="#777"/></svg>
<svg class="a" style="left:206px;top:616px" width="30" height="9"><path d="M0 1L3.5 3.5L7 1V7L3.5 4.5L0 7z" fill="#d2222a"/><text x="9" y="7.3" font-size="4.8" font-family="Liberation Serif" fill="#555">Lê Ánh</text></svg><div class="t" style="left:25px;top:642px;width:210px;text-align:center;font-size:6.9px;line-height:9px;font-family:'Liberation Serif',serif;color:#333">THỰC HÀNH GIẢI QUYẾT<br>TRANH CHẤP LAO ĐỘNG</div>
<div class="t" style="left:25px;top:666px;width:210px;text-align:center;font-size:4.4px;line-height:6px;font-family:'Liberation Serif',serif;color:#e0443a">Chia làm 3 nhóm<br>Nhóm có lý do hỗn nhiên thường</div>
<div class="a" style="left:25px;top:752px;width:210px;height:120px;border:1px solid #c8c8c8;background:#fff"></div>
<div class="t" style="left:7px;top:749px;font-size:17px;line-height:20px;color:#555">9</div>
<svg class="a" style="left:5px;top:771px" width="12" height="12"><path d="M6 0.5l1.6 3.7 4 .3-3 2.6 1 3.9L6 8.9 2.4 11l1-3.9-3-2.6 4-.3z" fill="#777"/></svg>
<svg class="a" style="left:206px;top:758px" width="30" height="9"><path d="M0 1L3.5 3.5L7 1V7L3.5 4.5L0 7z" fill="#d2222a"/><text x="9" y="7.3" font-size="4.8" font-family="Liberation Serif" fill="#555">Lê Ánh</text></svg><div class="t" style="left:40px;top:770.5px;font-size:5.3px;line-height:8px;font-family:'Liberation Serif',serif;color:#6a6a6a">Vào tháng 02/2021, Công ty TNHH Thái Tài Do tình hình dịch Covid-19, tình hình</div>
<div class="t" style="left:40px;top:777.0px;font-size:5.3px;line-height:8px;font-family:'Liberation Serif',serif;color:#6a6a6a">kinh doanh Công ty gặp nhiều khó khăn, giảm doanh thu, chi phí tăng cao. Nên Ban</div>
<div class="t" style="left:40px;top:783.5px;font-size:5.3px;line-height:8px;font-family:'Liberation Serif',serif;color:#6a6a6a">Lãnh đạo Công ty quyết định đóng cửa hoạt động 1 khu xưởng (khoảng 100 tiết xưởng</div>
<div class="t" style="left:40px;top:790.0px;font-size:5.3px;line-height:8px;font-family:'Liberation Serif',serif;color:#6a6a6a">và 15 nhân công). Công ty đã tiến hành ban hành Quyết định chấm dứt HĐLĐ và thanh</div>
<div class="t" style="left:40px;top:796.5px;font-size:5.3px;line-height:8px;font-family:'Liberation Serif',serif;color:#6a6a6a">toán trợ cấp thôi việc cho 15 NLĐ, NLĐ không đồng ý và đồng loạt gửi đơn khởi kiện</div>
<div class="t" style="left:40px;top:803.0px;font-size:5.3px;line-height:8px;font-family:'Liberation Serif',serif;color:#6a6a6a">đến cơ quan có thẩm quyền yêu cầu giải quyết tranh chấp</div><div class="t" style="left:40px;top:815.0px;font-size:5.3px;line-height:8px;font-family:'Liberation Serif',serif;color:#6a6a6a">Câu hỏi:</div>
<div class="t" style="left:40px;top:821.3px;font-size:5.3px;line-height:8px;font-family:'Liberation Serif',serif;color:#6a6a6a">1.&nbsp;&nbsp;&nbsp;Tranh chấp xảy ra thì đây là tranh chấp cá nhân hay tranh chấp tập thể ? Vì sao?</div>
<div class="t" style="left:40px;top:827.6px;font-size:5.3px;line-height:8px;font-family:'Liberation Serif',serif;color:#6a6a6a">2.&nbsp;&nbsp;&nbsp;Cơ quan, tổ chức nào có thẩm quyền giải quyết yêu cầu NLĐ nêu trên</div>
<div class="t" style="left:40px;top:833.9px;font-size:5.3px;line-height:8px;font-family:'Liberation Serif',serif;color:#6a6a6a">3.&nbsp;&nbsp;&nbsp;Công ty Thái Tài có căn cứ để chấm dứt HĐLĐ đối với những lao động này không?</div>
<div class="t" style="left:40px;top:840.2px;font-size:5.3px;line-height:8px;font-family:'Liberation Serif',serif;color:#6a6a6a">&nbsp;&nbsp;&nbsp;&nbsp;&nbsp;Tại sao? Hãy tư vấn cho Công ty những thủ tục cần thiết để thực hiện chấm dứt ?</div>
<div class="t" style="left:40px;top:846.5px;font-size:5.3px;line-height:8px;font-family:'Liberation Serif',serif;color:#6a6a6a">4.&nbsp;&nbsp;&nbsp;Việc Công ty Thái Tài thanh toán trợ cấp thôi việc cho 15 NLĐ là đúng hay sai ?</div>
<div class="t" style="left:40px;top:852.8px;font-size:5.3px;line-height:8px;font-family:'Liberation Serif',serif;color:#6a6a6a">&nbsp;&nbsp;&nbsp;&nbsp;&nbsp;Tại sao ?</div>
<div class="a" style="left:0;top:0;width:256px;height:962px;overflow:hidden"><div class="a" style="left:25px;top:894px;width:210px;height:106px;border:1px solid #c8c8c8;background:#fff"></div>
<div class="t" style="left:0px;top:891px;font-size:17px;line-height:20px;color:#555">10</div>
<svg class="a" style="left:5px;top:913px" width="12" height="12"><path d="M6 0.5l1.6 3.7 4 .3-3 2.6 1 3.9L6 8.9 2.4 11l1-3.9-3-2.6 4-.3z" fill="#777"/></svg>
<svg class="a" style="left:206px;top:900px" width="30" height="9"><path d="M0 1L3.5 3.5L7 1V7L3.5 4.5L0 7z" fill="#d2222a"/><text x="9" y="7.3" font-size="4.8" font-family="Liberation Serif" fill="#555">Lê Ánh</text></svg><div class="t" style="left:40px;top:907.0px;font-size:4.9px;line-height:8px;font-family:'Liberation Serif',serif;color:#6a6a6a">Bà Hà được Công ty CP Long Hậu tuyển dụng vào Công ty với vị trí Phó Tổng Giám đốc phụ</div>
<div class="t" style="left:40px;top:912.9px;font-size:4.9px;line-height:8px;font-family:'Liberation Serif',serif;color:#6a6a6a">trách mảng tài chính với mức lương theo HĐLĐ là 200.000.000 đ/tháng, hợp đồng lao động có</div>
<div class="t" style="left:40px;top:918.8px;font-size:4.9px;line-height:8px;font-family:'Liberation Serif',serif;color:#6a6a6a">thời hạn là 36 tháng và có hiệu lực từ 20/07/2021</div>
<div class="t" style="left:40px;top:924.7px;font-size:4.9px;line-height:8px;font-family:'Liberation Serif',serif;color:#6a6a6a">Tuy nhiên, đến ngày 22/09/2022 Công ty đánh giá Bà Hà không được bảo chuyên môn và không</div>
<div class="t" style="left:40px;top:930.6px;font-size:4.9px;line-height:8px;font-family:'Liberation Serif',serif;color:#6a6a6a">tin tưởng để giao tiếp công việc ở vị trí phụ trách mảng tài chính. Nên Công ty đã quyết định</div>
<div class="t" style="left:40px;top:936.5px;font-size:4.9px;line-height:8px;font-family:'Liberation Serif',serif;color:#6a6a6a">chấp dứt chức danh Phó Tổng Giám đốc phụ trách mảng tài chính theo HĐLĐ từ ngày</div>
<div class="t" style="left:40px;top:942.4px;font-size:4.9px;line-height:8px;font-family:'Liberation Serif',serif;color:#6a6a6a">22/09/2022 để bổ nhiệm ông Nam lên đảm nhận</div>
<div class="t" style="left:40px;top:948.3px;font-size:4.9px;line-height:8px;font-family:'Liberation Serif',serif;color:#6a6a6a">Câu hỏi như sau:</div>
<div class="t" style="left:40px;top:954.2px;font-size:4.9px;line-height:8px;font-family:'Liberation Serif',serif;color:#6a6a6a">1.&nbsp;&nbsp;&nbsp;Công ty Cổ phần Long Hậu có quyền ban hành Quyết định chấm dứt chức danh theo</div></div>
<!-- /THUMBS -->
<div class="a" style="left:282px;top:212px;width:1px;height:748px;background:#c9c9c9"></div>
<div class="a" style="left:282px;top:959px;width:1527px;height:1px;background:#c9c9c9"></div>
<div class="a" style="left:260px;top:212px;width:18px;height:748px;background:#dcdcdc"></div>
<div class="a" style="left:260px;top:212px;width:18px;height:18px;background:#fff;border:1px solid #d0d0d0"></div>
<svg class="a" style="left:263px;top:217px" width="12" height="8"><path d="M1 7L6 1.5L11 7z" fill="#555"/></svg>
<div class="a" style="left:260px;top:533px;width:18px;height:367px;background:#fff;border:1px solid #d0d0d0"></div>
<div class="a" style="left:260px;top:942px;width:18px;height:18px;background:#fff;border:1px solid #d0d0d0"></div>
<svg class="a" style="left:263px;top:947px" width="12" height="8"><path d="M1 1L6 6.5L11 1z" fill="#555"/></svg>


<!-- SLIDE -->
<div id="slide" class="a"></div>
<svg class="a" style="left:700px;top:415px" width="182" height="178">
 <path d="M2.9 4.4 C 10 45, 35 60, 64 59.6 C 110 59, 150 30, 177.6 3.4 L177.6 174.8 C 165 140, 150 119.5, 122.3 119.5 C 80 119.5, 30 150, 2.9 174.8 Z" fill="#fdf0f0"/>
 <path d="M2.9 174.8 L177.6 3.4 L177.6 174.8 C 165 140, 150 119.5, 122.3 119.5 C 80 119.5, 30 150, 2.9 174.8 Z" fill="#f4e6e8"/>
</svg>
<div class="wm" style="left:909px;top:412px;font-size:37px;font-weight:bold;color:#eceef1;line-height:40px">HR</div>
<div class="wm" style="left:908px;top:451px;font-family:'Liberation Serif',serif;font-size:113px;line-height:130px;color:#e7eaed">Lê Ánh</div>
<svg class="a" style="left:1240px;top:468px" width="20" height="20"><circle cx="10" cy="10" r="8.5" fill="none" stroke="#e8eaed" stroke-width="1.5"/><text x="10" y="14.5" text-anchor="middle" font-size="12" fill="#e8eaed" font-family="Liberation Sans">R</text></svg>
<div class="wm" style="left:910px;top:575.5px;font-size:11.5px;letter-spacing:3.85px;color:#eceef1;line-height:16px">TRAO KINH NGHIỆM - TẶNG TƯƠNG LAI</div>
<div class="wm" style="left:706px;top:599.5px;font-size:38px;font-weight:bold;color:#eff0f2;line-height:48px;transform:scaleX(0.95);transform-origin:0 0">WORKSHOP HR CÙNG LÊ ÁNH</div>
<div class="ss" style="left:521px;top:316px">CÁC HÌNH THỨC TỔ CHỨC GIẢI QUYẾT TRANH CHẤP</div>
<div class="ss" style="left:522px;top:473px">Hòa giải tranh chấp tại cơ sở</div>
<div class="ss" style="left:974px;top:473px">Hòa giải viên</div>
<div class="ss" style="left:1316px;top:473px">Giải quyết tranh chấp tại tòa án</div>
<div class="a" style="left:817px;top:503px;width:8px;height:360px;background:#e05a2c"></div>
<div class="a" style="left:1219px;top:503px;width:8px;height:360px;background:#e05a2c"></div>
<div class="st" style="left:466.5px;top:552.6px">1.</div>
<div class="st" style="left:501px;top:552.6px">Bắt buộc có Công đoàn tham gia</div>
<div class="st" style="left:466.5px;top:584.7px">2.</div>
<div class="st" style="left:501px;top:584.7px">Dựa vào cơ sở thỏa thuận 2 bên</div>
<div class="st" style="left:466.5px;top:616.9px">3.</div>
<div class="st" style="left:501px;top:616.9px">Dựa vào cơ sở luật thi hành</div>
<div class="st" style="left:466.5px;top:649.0px">4.</div>
<div class="st" style="left:501px;top:649.0px">Không tốn chi phí trong quá trình</div>
<div class="st" style="left:501px;top:681.2px">thực hiện</div>
<div class="st" style="left:858.5px;top:552.6px">1.</div>
<div class="st" style="left:893px;top:552.6px">Tại sở lao động/ NCC có chức năng</div>
<div class="st" style="left:893px;top:584.7px">thực hiện HGV</div>
<div class="st" style="left:858.5px;top:616.9px">2.</div>
<div class="st" style="left:893px;top:616.9px">Dựa vào cơ sở thỏa thuận 2 bên</div>
<div class="st" style="left:858.5px;top:649.0px">3.</div>
<div class="st" style="left:893px;top:649.0px">Dựa vào cơ sở luật thi hành</div>
<div class="st" style="left:858.5px;top:681.2px">4.</div>
<div class="st" style="left:893px;top:681.2px">Tham khảo kết luận của HGV</div>
<div class="st" style="left:858.5px;top:713.3px">5.</div>
<div class="st" style="left:893px;top:713.3px">Tốn chi phí thuế đơn vị tham gia</div>
<div class="st" style="left:1261.5px;top:552.6px">1.</div>
<div class="st" style="left:1296px;top:552.6px">Tòa án nhân dân có thẩm quyền giải quyết</div>
<div class="st" style="left:1296px;top:584.7px">tranh chấp</div>
<div class="st" style="left:1261.5px;top:616.9px">2.</div>
<div class="st" style="left:1296px;top:616.9px">Dựa vào cơ sở pháp lý được ban hành</div>
<div class="st" style="left:1296px;top:649.0px">trên hồ sơ tranh chấp</div>
<div class="st" style="left:1261.5px;top:681.2px">3.</div>
<div class="st" style="left:1296px;top:681.2px">Dựa vào cơ sở luật thi hành</div>
<div class="st" style="left:1261.5px;top:713.3px">4.</div>
<div class="st" style="left:1296px;top:713.3px">Căn cứ theo kết luận của tòa án để thi</div>
<div class="st" style="left:1296px;top:745.5px">hành nghĩa vụ</div>
<div class="st" style="left:1261.5px;top:777.6px">5.</div>
<div class="st" style="left:1296px;top:777.6px">Tốn chi phí thuê án phí</div>
<div class="a" style="left:1311px;top:894px;width:288px;height:40px;border:1px dashed #777"></div>
<div class="st" style="left:1323px;top:901.3px;font-size:23.4px;line-height:30px">Slide Number</div>


<!-- STATUS -->
<div id="status" class="a"></div>
<div id="taskbar" class="a"></div>


<!-- window controls -->
<svg class="a" style="left:1628px;top:6px" width="18" height="13" fill="none" stroke="#fff" stroke-width="1.3"><rect x="0.7" y="0.7" width="15.6" height="11.6"/><path d="M1 2.5h15"/><path d="M8.5 11V5M6 7.5l2.5-2.5 2.5 2.5"/></svg>
<div class="a" style="left:1686px;top:14px;width:11px;height:1.6px;background:#fff"></div>
<svg class="a" style="left:1740px;top:5px" width="22" height="13" fill="none" stroke="#fff" stroke-width="1.2"><rect x="0.6" y="4.6" width="9" height="7.5"/><path d="M3 4.5V2.5h8v7H10M11 4h10"/></svg>
<svg class="a" style="left:1793px;top:5px" width="15" height="14" fill="none" stroke="#fff" stroke-width="1.6"><path d="M1 1l11 11M12 1L1 12"/><path d="M4 1.5h9v8" stroke-width="1"/></svg>
<div class="a" style="left:1822px;top:0;width:2px;height:28px;background:#8cc63f"></div>
<div class="a" style="left:1822px;top:815px;width:2px;height:173px;background:#8cc63f"></div>
<!-- right scrollbar -->
<div class="a" style="left:1809px;top:210px;width:13px;height:752px;background:#e6e6e6"></div>
<div class="a" style="left:1810px;top:820px;width:12px;height:56px;background:#dadada"></div>
<div class="a" style="left:1810px;top:877px;width:12px;height:17px;background:#fff;border:1px solid #d0d0d0"></div>
<svg class="a" style="left:1811px;top:882px" width="10" height="7"><path d="M0.5 1h9L5 6z" fill="#555"/></svg>
<svg class="a" style="left:1811px;top:897px" width="10" height="14" fill="#666"><path d="M0.5 6L5 1.5L9.5 6z"/><path d="M0.5 12L5 7.5L9.5 12z"/></svg>
<svg class="a" style="left:1811px;top:917px" width="10" height="14" fill="#666"><path d="M0.5 1.5L5 6L9.5 1.5z"/><path d="M0.5 7.5L5 12L9.5 7.5z"/></svg>
<!-- status bar content -->
<div class="t" style="left:0px;top:965px;font-size:12.3px;color:#444">Slide 7 of 10</div>
<svg class="a" style="left:95px;top:966px" width="18" height="16" fill="none" stroke="#666" stroke-width="1.1"><path d="M1 1.5h7v13H1zM8 1.5h7"/><path d="M8 3v12"/><path d="M10.5 5l4 4M14.5 5l-4 4"/></svg>
<div class="t" style="left:129px;top:965px;font-size:12.3px;color:#444">English (United States)</div>
<svg class="a" style="left:1268px;top:967px" width="14" height="14" fill="#666"><path d="M7 0.5L11 4.5H3z"/><rect x="1" y="6" width="12" height="1.2"/><rect x="1" y="8.8" width="12" height="1.2"/><rect x="1" y="11.6" width="12" height="1.2"/></svg>
<div class="t" style="left:1287px;top:965px;font-size:12.3px;color:#444">Notes</div>
<svg class="a" style="left:1340px;top:966px" width="16" height="15"><path d="M1 1h14v9H7l-3 4v-4H1z" fill="#666"/></svg>
<div class="t" style="left:1360px;top:965px;font-size:12.3px;color:#444">Comments</div>
<div class="a" style="left:1438px;top:963px;width:39px;height:25px;background:#d4d4d4"></div>
<svg class="a" style="left:1449px;top:967px" width="16" height="15" fill="none" stroke="#666" stroke-width="1.1"><rect x="0.6" y="0.6" width="14.5" height="13.5"/><rect x="3.6" y="3.6" width="8.5" height="5"/><path d="M3 11h10M3.6 3.6v7"/></svg>
<svg class="a" style="left:1489px;top:967px" width="15" height="15" fill="none" stroke="#666" stroke-width="1.1"><rect x="0.6" y="0.6" width="5.5" height="5"/><rect x="8.6" y="0.6" width="5.5" height="5"/><rect x="0.6" y="8.6" width="5.5" height="5"/><rect x="8.6" y="8.6" width="5.5" height="5"/></svg>
<svg class="a" style="left:1527px;top:967px" width="15" height="15" fill="none" stroke="#666" stroke-width="1.1"><path d="M1 1.5l6 1.5v11l-6-1.5zM14 1.5L8 3v11l6-1.5z"/><path d="M3 5v6M5 5v6M10 5v6M12 5v6"/></svg>
<svg class="a" style="left:1566px;top:967px" width="16" height="15" fill="none" stroke="#666" stroke-width="1.1"><path d="M0 1h16"/><rect x="1.6" y="1.6" width="12.5" height="7"/><path d="M8 9v4M5 14l3-2 3 2"/></svg>
<div class="a" style="left:1598px;top:974px;width:10px;height:2px;background:#555"></div>
<div class="a" style="left:1612px;top:974.5px;width:121px;height:1px;background:#b5b5b5"></div>
<div class="a" style="left:1672px;top:967px;width:4px;height:15px;background:#666"></div>
<div class="a" style="left:1735px;top:974px;width:12px;height:2px;background:#555"></div>
<div class="a" style="left:1740px;top:969px;width:2px;height:12px;background:#555"></div>
<div class="t" style="left:1761px;top:965px;font-size:12.3px;color:#444">107%</div>
<svg class="a" style="left:1805px;top:966px" width="17" height="17" fill="none" stroke="#777" stroke-width="1.1"><rect x="0.6" y="0.6" width="15" height="15"/><path d="M8 2v4M6 4l2-2 2 2M8 14v-4M6 12l2 2 2-2M2 8h4M4 6l-2 2 2 2M14 8h-4M12 6l2 2-2 2"/></svg>
<!-- taskbar content -->
<svg class="a" style="left:8px;top:999px" width="16" height="16" fill="#fff"><rect x="0" y="0" width="7.3" height="7.3"/><rect x="8.3" y="0" width="7.7" height="7.3"/><rect x="0" y="8.3" width="7.3" height="7.7"/><rect x="8.3" y="8.3" width="7.7" height="7.7"/></svg>
<svg class="a" style="left:53px;top:996px" width="20" height="19" fill="none" stroke="#fff" stroke-width="1.8"><circle cx="11.5" cy="8" r="6.5"/><path d="M7 12.5L1 18.5"/></svg>
<svg class="a" style="left:100px;top:998px" width="17" height="17" fill="none" stroke="#fff" stroke-width="1.3"><rect x="0.6" y="3.6" width="11" height="9"/><path d="M14 0v17M0.6 0.6h10M0.6 15.5h10"/></svg>
<svg class="a" style="left:146px;top:996px" width="21" height="19"><rect x="7" y="3" width="13" height="12" fill="#28a8ea"/><path d="M9 6l5 4 5-4" stroke="#fff" stroke-width="1.3" fill="none"/><rect x="0" y="1" width="12" height="17" fill="#0a64ad"/><text x="6" y="14" text-anchor="middle" font-size="10" font-weight="bold" fill="#fff" font-family="Liberation Sans">O</text></svg>
<svg class="a" style="left:192px;top:996px" width="23" height="19"><path d="M2 12C2 5 7 1 12 1s10 4 10 9c0 3-2 5-6 5-3 0-4-2-4-4 0-4-3-6-6-5" fill="#3ccf7a"/><path d="M2 12c0-5 4-8 8-8 3 0 4 3 4 5-4 0-6 3-5 8-4-1-7-3-7-5z" fill="#1a7fd6"/><rect x="7" y="13" width="8" height="6" fill="#e8882b"/></svg>
<svg class="a" style="left:240px;top:996px" width="21" height="19"><path d="M0 2h8l2 2h11v15H0z" fill="#f4c247"/><rect x="0" y="6" width="21" height="13" fill="#fcd86b"/><rect x="6" y="11" width="9" height="7" fill="#3a84cc"/></svg>
<svg class="a" style="left:284px;top:995px" width="25" height="20"><path d="M3 10C3 4 7 1 12.5 1S22 4 22 10s-4 9-9.5 9c-2 0-4-.5-5.5-1.5L3 20l1-4C3 14 3 12 3 10z" fill="#fff"/><path d="M4 10c0-5 3.5-8 8.5-8" stroke="#0068ff" stroke-width="2" fill="none"/><text x="13" y="13" text-anchor="middle" font-size="8" font-weight="bold" fill="#0068ff" font-family="Liberation Sans">Zalo</text></svg>
<svg class="a" style="left:332px;top:995px" width="23" height="20"><ellipse cx="11.5" cy="11" rx="11.5" ry="11" fill="#2d8cff"/><text x="11.5" y="13.5" text-anchor="middle" font-size="6.5" font-weight="bold" fill="#fff" font-family="Liberation Sans">zoom</text></svg>
<div class="a" style="left:368px;top:988px;width:45px;height:27px;background:#46525c"></div>
<svg class="a" style="left:380px;top:995px" width="22" height="20"><rect x="9" y="2" width="12" height="16" fill="#fff"/><path d="M12 6h7M12 9h7M12 12h5" stroke="#ed6c47" stroke-width="1.3"/><rect x="0" y="3" width="13" height="17" fill="#c43e1c"/><text x="6.5" y="16" text-anchor="middle" font-size="11" font-weight="bold" fill="#fff" font-family="Liberation Sans">P</text></svg>
<div class="t" style="left:1760px;top:988px;font-size:12px;color:#fff;width:56px;text-align:right">8:08 PM</div>
<div class="t" style="left:1740px;top:1003px;font-size:12px;color:#fff;width:80px;text-align:right">28-Jan-24</div>

<div class="a" style="left:1218px;top:197px;width:56px;height:56px;border-radius:50%;background:rgba(238,226,0,0.93)"></div>
<svg class="a" style="left:1245px;top:224px" width="14" height="20"><path d="M1 1v15l3.5-3.5 2.7 5.8 2.6-1.2-2.7-5.6H12z" fill="#fff" stroke="#000" stroke-width="1.1" stroke-linejoin="round"/></svg>
<!-- ZOOM -->
<div id="zoom" class="a"></div>
<div class="a" style="left:1410px;top:52.0px;width:212px;height:122px;background:#222223"></div>
<div class="a" style="left:1626px;top:52.0px;width:200px;height:122px;background:#222223"></div>
<div class="a" style="left:1410px;top:175.2px;width:212px;height:122px;background:#222223"></div>
<div class="a" style="left:1626px;top:175.2px;width:200px;height:122px;background:#222223"></div>
<div class="a" style="left:1410px;top:298.4px;width:212px;height:122px;background:#222223"></div>
<div class="a" style="left:1626px;top:298.4px;width:200px;height:122px;background:#222223"></div>
<div class="a" style="left:1410px;top:421.6px;width:212px;height:122px;background:#222223"></div>
<div class="a" style="left:1626px;top:421.6px;width:200px;height:122px;background:#222223"></div>
<div class="a" style="left:1410px;top:544.8px;width:212px;height:122px;background:#222223"></div>
<div class="a" style="left:1626px;top:544.8px;width:200px;height:122px;background:#222223"></div>
<div class="a" style="left:1410px;top:668.0px;width:212px;height:122px;background:#222223"></div>
<div class="a" style="left:1626px;top:668.0px;width:200px;height:122px;background:#222223"></div>
<div class="t" style="left:1410px;width:212px;text-align:center;top:103px;font-size:14.5px;font-weight:bold;color:#f2f2f2">Nguyễn Ngọc L...</div>
<div class="a" style="left:1410px;top:155px;width:163px;height:19px;background:#2c2c2d"></div>
<svg class="a" style="left:1412px;top:157px" width="14" height="14"><rect x="5" y="1" width="5" height="8" rx="2.5" fill="#e0483e"/><path d="M3 7a4.5 4.5 0 0 0 9 0M7.5 11.5v2M5 13.5h5" fill="none" stroke="#e0483e" stroke-width="1.2"/><path d="M1.5 13L12.5 1" stroke="#e0483e" stroke-width="1.6"/><path d="M2.8 13.6L13.6 1.8" stroke="#262626" stroke-width="0.7"/></svg>
<div class="t" style="left:1431px;top:155px;font-size:12px;color:#e6e6e6">Nguyễn Ngọc Lan - K212</div>
<div class="a" style="left:1410px;top:278px;width:69px;height:19px;background:#2c2c2d"></div>
<svg class="a" style="left:1412px;top:280px" width="14" height="14"><rect x="5" y="1" width="5" height="8" rx="2.5" fill="#e0483e"/><path d="M3 7a4.5 4.5 0 0 0 9 0M7.5 11.5v2M5 13.5h5" fill="none" stroke="#e0483e" stroke-width="1.2"/><path d="M1.5 13L12.5 1" stroke="#e0483e" stroke-width="1.6"/><path d="M2.8 13.6L13.6 1.8" stroke="#262626" stroke-width="0.7"/></svg>
<div class="t" style="left:1431px;top:278px;font-size:12px;color:#e6e6e6">Tâm Lê</div>
<div class="t" style="left:1626px;width:216px;text-align:center;top:226px;font-size:14.5px;font-weight:bold;color:#f2f2f2">admin</div>
<div class="a" style="left:1626px;top:278px;width:61px;height:19px;background:#2c2c2d"></div>
<svg class="a" style="left:1628px;top:280px" width="14" height="14"><rect x="5" y="1" width="5" height="8" rx="2.5" fill="#e0483e"/><path d="M3 7a4.5 4.5 0 0 0 9 0M7.5 11.5v2M5 13.5h5" fill="none" stroke="#e0483e" stroke-width="1.2"/><path d="M1.5 13L12.5 1" stroke="#e0483e" stroke-width="1.6"/><path d="M2.8 13.6L13.6 1.8" stroke="#262626" stroke-width="0.7"/></svg>
<div class="t" style="left:1647px;top:278px;font-size:12px;color:#e6e6e6">admin</div>
<div class="t" style="left:1410px;width:212px;text-align:center;top:349px;font-size:14.5px;font-weight:bold;color:#f2f2f2">LE ANH HR</div>
<div class="a" style="left:1410px;top:401px;width:91px;height:19px;background:#2c2c2d"></div>
<svg class="a" style="left:1412px;top:403px" width="14" height="14"><rect x="5" y="1" width="5" height="8" rx="2.5" fill="#e0483e"/><path d="M3 7a4.5 4.5 0 0 0 9 0M7.5 11.5v2M5 13.5h5" fill="none" stroke="#e0483e" stroke-width="1.2"/><path d="M1.5 13L12.5 1" stroke="#e0483e" stroke-width="1.6"/><path d="M2.8 13.6L13.6 1.8" stroke="#262626" stroke-width="0.7"/></svg>
<div class="t" style="left:1431px;top:401px;font-size:12px;color:#e6e6e6">LE ANH HR</div>
<div class="t" style="left:1626px;width:216px;text-align:center;top:349px;font-size:14.5px;font-weight:bold;color:#f2f2f2">CNhu</div>
<div class="a" style="left:1626px;top:401px;width:59px;height:19px;background:#2c2c2d"></div>
<svg class="a" style="left:1628px;top:403px" width="14" height="14"><rect x="5" y="1" width="5" height="8" rx="2.5" fill="#e0483e"/><path d="M3 7a4.5 4.5 0 0 0 9 0M7.5 11.5v2M5 13.5h5" fill="none" stroke="#e0483e" stroke-width="1.2"/><path d="M1.5 13L12.5 1" stroke="#e0483e" stroke-width="1.6"/><path d="M2.8 13.6L13.6 1.8" stroke="#262626" stroke-width="0.7"/></svg>
<div class="t" style="left:1647px;top:401px;font-size:12px;color:#e6e6e6">CNhu</div>
<div class="t" style="left:1410px;width:212px;text-align:center;top:472px;font-size:14.5px;font-weight:bold;color:#f2f2f2">HỒNG PHƯỢN...</div>
<div class="a" style="left:1410px;top:524px;width:155px;height:19px;background:#2c2c2d"></div>
<svg class="a" style="left:1412px;top:526px" width="14" height="14"><rect x="5" y="1" width="5" height="8" rx="2.5" fill="#e0483e"/><path d="M3 7a4.5 4.5 0 0 0 9 0M7.5 11.5v2M5 13.5h5" fill="none" stroke="#e0483e" stroke-width="1.2"/><path d="M1.5 13L12.5 1" stroke="#e0483e" stroke-width="1.6"/><path d="M2.8 13.6L13.6 1.8" stroke="#262626" stroke-width="0.7"/></svg>
<div class="t" style="left:1431px;top:524px;font-size:12px;color:#e6e6e6">HỒNG PHƯỢNG-K212</div>
<div class="t" style="left:1626px;width:216px;text-align:center;top:472px;font-size:14.5px;font-weight:bold;color:#f2f2f2">Nguyễn Đoan Tr...</div>
<div class="a" style="left:1626px;top:524px;width:170px;height:19px;background:#2c2c2d"></div>
<svg class="a" style="left:1628px;top:526px" width="14" height="14"><rect x="5" y="1" width="5" height="8" rx="2.5" fill="#e0483e"/><path d="M3 7a4.5 4.5 0 0 0 9 0M7.5 11.5v2M5 13.5h5" fill="none" stroke="#e0483e" stroke-width="1.2"/><path d="M1.5 13L12.5 1" stroke="#e0483e" stroke-width="1.6"/><path d="M2.8 13.6L13.6 1.8" stroke="#262626" stroke-width="0.7"/></svg>
<div class="t" style="left:1647px;top:524px;font-size:12px;color:#e6e6e6">Nguyễn Đoan Trang_K207</div>
<div class="t" style="left:1410px;width:212px;text-align:center;top:595px;font-size:14.5px;font-weight:bold;color:#f2f2f2">Nguyễn Thị Hoa</div>
<div class="a" style="left:1410px;top:648px;width:114px;height:19px;background:#2c2c2d"></div>
<svg class="a" style="left:1412px;top:650px" width="14" height="14"><rect x="5" y="1" width="5" height="8" rx="2.5" fill="#e0483e"/><path d="M3 7a4.5 4.5 0 0 0 9 0M7.5 11.5v2M5 13.5h5" fill="none" stroke="#e0483e" stroke-width="1.2"/><path d="M1.5 13L12.5 1" stroke="#e0483e" stroke-width="1.6"/><path d="M2.8 13.6L13.6 1.8" stroke="#262626" stroke-width="0.7"/></svg>
<div class="t" style="left:1431px;top:648px;font-size:12px;color:#e6e6e6">Nguyễn Thị Hoa</div>
<div class="t" style="left:1626px;width:216px;text-align:center;top:595px;font-size:14.5px;font-weight:bold;color:#f2f2f2">Dao Thi Thanh T...</div>
<div class="a" style="left:1626px;top:648px;width:171px;height:19px;background:#2c2c2d"></div>
<svg class="a" style="left:1628px;top:650px" width="14" height="14"><rect x="5" y="1" width="5" height="8" rx="2.5" fill="#e0483e"/><path d="M3 7a4.5 4.5 0 0 0 9 0M7.5 11.5v2M5 13.5h5" fill="none" stroke="#e0483e" stroke-width="1.2"/><path d="M1.5 13L12.5 1" stroke="#e0483e" stroke-width="1.6"/><path d="M2.8 13.6L13.6 1.8" stroke="#262626" stroke-width="0.7"/></svg>
<div class="t" style="left:1647px;top:648px;font-size:12px;color:#e6e6e6">Dao Thi Thanh Thuy_T246</div>
<div class="t" style="left:1410px;width:212px;text-align:center;top:719px;font-size:14.5px;font-weight:bold;color:#f2f2f2">Như Quỳnh K19...</div>
<div class="a" style="left:1410px;top:771px;width:146px;height:19px;background:#2c2c2d"></div>
<svg class="a" style="left:1412px;top:773px" width="14" height="14"><rect x="5" y="1" width="5" height="8" rx="2.5" fill="#e0483e"/><path d="M3 7a4.5 4.5 0 0 0 9 0M7.5 11.5v2M5 13.5h5" fill="none" stroke="#e0483e" stroke-width="1.2"/><path d="M1.5 13L12.5 1" stroke="#e0483e" stroke-width="1.6"/><path d="M2.8 13.6L13.6 1.8" stroke="#262626" stroke-width="0.7"/></svg>
<div class="t" style="left:1431px;top:771px;font-size:12px;color:#e6e6e6">Như Quỳnh K199C&amp;B</div>
<div class="t" style="left:1626px;width:216px;text-align:center;top:719px;font-size:14.5px;font-weight:bold;color:#f2f2f2">Tran Huyen B00...</div>
<div class="a" style="left:1626px;top:771px;width:130px;height:19px;background:#2c2c2d"></div>
<svg class="a" style="left:1628px;top:773px" width="14" height="14"><rect x="5" y="1" width="5" height="8" rx="2.5" fill="#e0483e"/><path d="M3 7a4.5 4.5 0 0 0 9 0M7.5 11.5v2M5 13.5h5" fill="none" stroke="#e0483e" stroke-width="1.2"/><path d="M1.5 13L12.5 1" stroke="#e0483e" stroke-width="1.6"/><path d="M2.8 13.6L13.6 1.8" stroke="#262626" stroke-width="0.7"/></svg>
<div class="t" style="left:1647px;top:771px;font-size:12px;color:#e6e6e6">Tran Huyen B004C</div>
<div class="a" style="left:1624px;top:51px;width:200px;height:125px;border:2px solid #e3e59b;border-right:none;overflow:hidden;background:#d9d9d9">
<svg width="200" height="125" style="display:block">
<defs><radialGradient id="wall" cx="0.42" cy="0.1" r="0.95"><stop offset="0" stop-color="#fdfdfd"/><stop offset="0.55" stop-color="#e2e2e2"/><stop offset="1" stop-color="#aca59c"/></radialGradient>
<filter id="vb" x="-5%" y="-5%" width="110%" height="110%"><feGaussianBlur stdDeviation="1.3"/></filter></defs>
<rect width="200" height="125" fill="url(#wall)"/>
<g filter="url(#vb)">
<path d="M-5 95 L60 100 L70 130 L-5 130z" fill="#b0a698" opacity="0.8"/>
<rect x="176" y="-5" width="30" height="135" fill="#2a2b2d"/>
<path d="M179 0v125M184 0v125M189 0v125M195 0v125" stroke="#4d4e51" stroke-width="1.2"/>
<ellipse cx="46" cy="68" rx="9" ry="13" fill="#3e4043"/>
<ellipse cx="46" cy="68" rx="4" ry="6" fill="#1b1b1b"/>
<rect x="49" y="80" width="3" height="45" fill="#222"/>
<path d="M73 94c0-14 4-22 11-22s11 8 11 22v12H73z" fill="#151515"/>
<path d="M42 130c6-22 26-34 66-36 34 1 48 14 56 36z" fill="#eceef2"/>
<path d="M80 96l28 12 22-14 -2-6-20 12-24-10z" fill="#1d2a2e"/>
<path d="M106 104l2 22 3-22z" fill="#1d2a2e"/>
<ellipse cx="108" cy="74" rx="22" ry="25" fill="#c08f78"/>
<path d="M85 72c-4-30 8-44 23-44s27 13 23 44c-2-12-9-20-23-20s-21 8-23 20z" fill="#1f1d1d"/>
<path d="M97 88q11 7 22 0q-11 5-22 0z" fill="#6a3530"/>
<ellipse cx="99" cy="72" rx="3" ry="1.5" fill="#5a3a30"/>
<ellipse cx="118" cy="72" rx="3" ry="1.5" fill="#5a3a30"/>
<path d="M139 95h31v20h-31z" fill="#d8dadc"/>
<path d="M141 100h10v6h-10zM155 102h10v5h-10z" fill="#9aa0a5"/>
</g>
</svg>
<div class="a" style="left:1px;top:102px;width:68px;height:19px;background:rgba(45,45,45,.78)"></div>
<div class="t" style="left:4px;top:101px;font-size:12.5px;color:#fff">Admin LHC</div>
</div>
<div class="a" style="left:1478px;top:198px;width:77px;height:77px;overflow:hidden;background:#5bb04a">
<svg width="77" height="77" style="display:block">
<defs><filter id="tb" x="-5%" y="-5%" width="110%" height="110%"><feGaussianBlur stdDeviation="1.1"/></filter></defs>
<g filter="url(#tb)">
<rect x="-5" y="-5" width="90" height="90" fill="#62b04c"/>
<rect x="-5" y="18" width="14" height="45" fill="#b9c2c8"/>
<rect x="58" y="6" width="24" height="38" fill="#9eabb4"/>
<path d="M2 82c-2-22 0-56 18-72 16-12 38-10 46 8 6 14 4 40 12 64z" fill="#231c1d"/>
<path d="M60 20c6 10 8 30 6 50" stroke="#6b2a2e" stroke-width="4" fill="none" opacity="0.6"/>
<ellipse cx="45" cy="46" rx="20" ry="25" fill="#f0d5c8"/>
<path d="M22 44c0-22 12-34 26-33 12 1 18 10 19 22-7-8-16-11-26-9-8 2-14 10-19 20z" fill="#2a2021"/>
<ellipse cx="37" cy="41" rx="3" ry="1.3" fill="#6b4a40"/>
<ellipse cx="52" cy="38" rx="3" ry="1.3" fill="#6b4a40"/>
<path d="M39 58q8 4 14-2" stroke="#b03a40" stroke-width="2" fill="#fff"/>
<path d="M14 82c8-10 20-12 32-10 12-2 22 2 30 10z" fill="#1a1a1a"/>
</g>
</svg></div>


</body></html>
